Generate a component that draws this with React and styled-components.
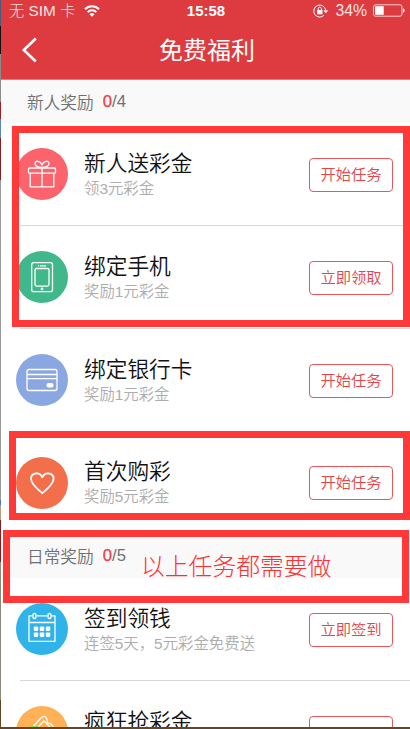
import React from "react";
import styled, { createGlobalStyle } from "styled-components";

const Global = createGlobalStyle`
  * { box-sizing: border-box; }
  html, body { margin: 0; padding: 0; overflow: hidden; }
  body { font-family: "Liberation Sans", "Noto Sans CJK SC", sans-serif; }
`;

const Screen = styled.div`
  position: relative;
  width: 410px;
  height: 729px;
  overflow: hidden;
  display: flex;
  flex-direction: column;
  background: #644526;
`;

const Body = styled.div`
  display: flex;
  height: 727px;
  overflow: hidden;
`;

const Edge = styled.div`
  flex: 0 0 1px;
  background: linear-gradient(#4a5b78 0 26px, #111 26px 54px, #8c8c8c 54px 102px, #9b2024 102px 119px, #5b87bd 119px 138px, #8e1b1f 138px 180px, #999 180px 500px, #4679ae 500px 505px, #b79b7c 505px 520px, #8e1b1f 520px 562px, #8d887c 562px 700px, #644526 700px);
`;

const Page = styled.main`
  flex: 1;
  background: #fff;
`;

const Header = styled.header`
  height: 80px;
  background: #dd3b40;
  border-bottom: 1px solid #b98f90;
  color: #fff;
`;

const StatusBar = styled.div`
  height: 21px;
  display: grid;
  grid-template-columns: 1fr auto 1fr;
  align-items: center;
  padding: 0 5px 0 8px;
  font-size: 15px;
  line-height: 21px;
`;

const StatusGroup = styled.div`
  display: flex;
  align-items: center;
  justify-content: ${(p) => (p.$end ? "flex-end" : "flex-start")};
  gap: ${(p) => (p.$end ? 6 : 9)}px;
  color: #fbe4e4;
  white-space: nowrap;
  font-weight: 300;
  font-size: ${(p) => (p.$end ? 15.8 : 15.3)}px;
`;

const Clock = styled.span`
  font-weight: 700;
  margin: 0 1px 0 -1px;
`;

const NavBar = styled.div`
  height: 58px;
  display: grid;
  grid-template-columns: 56px 1fr 56px;
  align-items: center;
  padding-left: 1px;
`;

const BackButton = styled.button`
  border: 0;
  padding: 0 0 0 19px;
  background: none;
  color: #fff;
  display: flex;
`;

const PageTitle = styled.h1`
  margin: 0;
  padding: 2px 0 0 2px;
  text-align: center;
  font-size: 24px;
  line-height: 36px;
  font-weight: 400;
`;

const SectionHead = styled.h2`
  margin: 0;
  height: ${(p) => p.$height}px;
  padding: 0 0 0 26px;
  display: flex;
  align-items: center;
  gap: 9px;
  background: #f9f9f9;
  color: #707070;
  font-size: 16.7px;
  font-weight: 350;
`;

const Done = styled.b`
  color: #ec4347;
  font-weight: 400;
  -webkit-text-stroke: 0.3px #ec4347;
`;

const Row = styled.article`
  position: relative;
  height: ${(p) => p.$height}px;
  padding: 0 17px 0 15px;
  display: flex;
  align-items: center;
  &::after {
    content: "";
    position: absolute;
    left: 19px;
    right: 0;
    bottom: 0;
    height: 1px;
    background: ${(p) => (p.$line ? "#d8d8d8" : "transparent")};
  }
`;

const Badge = styled.div`
  flex: 0 0 52px;
  height: 52px;
  margin-bottom: 1px;
  border-radius: 50%;
  background: ${(p) => p.$color};
  display: flex;
`;

const RowText = styled.div`
  flex: 1;
  padding-left: 16px;
`;

const RowTitle = styled.h3`
  margin: 0;
  font-size: 21.7px;
  line-height: 27px;
  font-weight: 350;
  color: #111;
`;

const RowNote = styled.p`
  margin: 0;
  font-size: 15.4px;
  line-height: 23px;
  font-weight: 350;
  color: #adadad;
`;

const Action = styled.button`
  flex: 0 0 84px;
  height: 34px;
  padding: 0;
  border: 1px solid #e5585c;
  border-radius: 4px;
  background: #fff;
  color: #e2464b;
  font: 350 15.3px/30px "Liberation Sans", "Noto Sans CJK SC", sans-serif;
`;

const Frame = styled.div`
  position: absolute;
  left: ${(p) => p.$x}px;
  top: ${(p) => p.$y}px;
  width: ${(p) => p.$w}px;
  height: ${(p) => p.$h}px;
  border: 7px solid #ff3838;
  pointer-events: none;
`;

const Remark = styled.p`
  position: absolute;
  left: 141px;
  top: 548px;
  margin: 0;
  font: 300 23.8px/34px "Noto Sans CJK SC", sans-serif;
  color: #ff3030;
  white-space: nowrap;
`;

const Glyph = styled.svg`
  display: block;
  fill: none;
  stroke: currentColor;
  color: #fff;
  stroke-linejoin: round;
`;

const Icon = ({ children }) => (
  <Glyph width="52" height="52" viewBox="0 0 52 52" strokeWidth="1.3">{children}</Glyph>
);

const icons = {
  gift: (
    <Icon>
      <rect x="12.5" y="20" width="27" height="5.2" rx="1" />
      <path d="M14.2 25.2v13.6h23.6V25.2M26 20v18.8" />
      <path d="M26 19.5c-3-.2-7-1.4-7-4 0-3.4 5.5-3 7 1.5 1.5-4.5 7-4.9 7-1.5 0 2.6-4 3.800-7 4z" />
    </Icon>
  ),
  phone: (
    <Icon>
      <rect x="15.7" y="11.7" width="20.8" height="29" rx="2" />
      <rect x="19" y="17.5" width="14" height="17.6" rx="1.5" />
      <path d="M22 14.8h1M24 14.8h6" />
      <circle cx="26" cy="37.8" r="1.4" fill="#fff" stroke="none" />
    </Icon>
  ),
  card: (
    <Icon>
      <rect x="11" y="15.5" width="30" height="21" rx="2" />
      <path d="M11 20.5h30M11 24.6h30" />
      <rect x="30.5" y="29" width="7" height="4.5" rx="2" fill="#fff" stroke="none" />
    </Icon>
  ),
  heart: (
    <Icon>
      <path strokeWidth="1.8" d="M26.300 36.200C22 32.200 15 27.500 15 21.800c0-6.200 8.500-7.400 11.300-1.500 2.800-5.900 11.300-4.700 11.300 1.500 0 5.700-7 10.400-11.300 14.400z" />
    </Icon>
  ),
  calendar: (
    <Icon>
      <path d="M16.5 12.8H13v25.5h26V12.8h-3.500M20.5 12.8h11M13 19.5h26" />
      <rect x="17" y="10.5" width="3" height="5" rx="1.3" />
      <rect x="32" y="10.5" width="3" height="5" rx="1.3" />
      <g fill="#fff" stroke="none">
        {[17.8, 23.8, 29.8].map((x) => [23.5, 29.5].map((y) => (
          <rect key={`${x}-${y}`} x={x} y={y} width="4.4" height="4.4" rx="0.8" />
        )))}
      </g>
    </Icon>
  ),
  coupon: (
    <Icon>
      <path d="M16 22l9-10c2-2 4-2 5-.5l1.500 2.500c-1 2 .5 4 3 3.500l5 6" />
      <path d="M21 22l7-7 6 6" />
      <ellipse cx="18.5" cy="25" rx="9.500" ry="5" fill="#82d957" stroke="none" />
    </Icon>
  ),
};

const Wifi = () => (
  <Glyph width="16" height="12" viewBox="0 0 16 12" strokeWidth="2">
    <path d="M1 4.2a10 10 0 0 1 14 0M3.6 7.1a6.300 6.300 0 0 1 8.800 0" />
    <path d="M8 11.8L5.5 9.3a3.6 3.6 0 0 1 5 0z" fill="#fff" stroke="none" />
  </Glyph>
);

const RotationLock = () => (
  <Glyph width="16" height="14" viewBox="0 0 16 14" strokeWidth="1">
    <path d="M12.7 6.2A6 6 0 1 0 11 11.3" />
    <path d="M10.3 6.2h5l-2.5 3z" fill="#fff" stroke="none" />
    <rect x="4" y="6" width="5.5" height="4.3" fill="#fff" stroke="none" />
    <path d="M5.2 6V4.8a1.600 1.600 0 0 1 3.200 0V6" />
  </Glyph>
);

const Battery = () => (
  <Glyph width="32" height="13" viewBox="0 0 32 13" strokeWidth="1">
    <rect x=".5" y=".8" width="28.5" height="11.4" rx="2" strokeOpacity=".75" />
    <rect x="2" y="2.2" width="8.7" height="8.6" fill="#fff" stroke="none" />
    <path d="M30 4.3c2.200 1 2.200 3.400 0 4.400z" fill="#fff" stroke="none" />
  </Glyph>
);

const newcomerTasks = [
  { icon: "gift", color: "#fb646c", title: "新人送彩金", note: "领3元彩金", action: "开始任务", height: 103, line: true },
  { icon: "phone", color: "#41b88b", title: "绑定手机", note: "奖励1元彩金", action: "立即领取", height: 103, line: true },
  { icon: "card", color: "#8ba7e1", title: "绑定银行卡", note: "奖励1元彩金", action: "开始任务", height: 103, line: true },
  { icon: "heart", color: "#f36f4b", title: "首次购彩", note: "奖励5元彩金", action: "开始任务", height: 102 },
];

const dailyTasks = [
  { icon: "calendar", color: "#2fb3e9", title: "签到领钱", note: "连签5天，5元彩金免费送", action: "立即签到", height: 103, line: true },
  { icon: "coupon", color: "#ffb157", title: "疯狂抢彩金", note: "", action: "", height: 103 },
];

const Task = ({ task }) => (
  <Row $height={task.height} $line={task.line}>
    <Badge $color={task.color}>{icons[task.icon]}</Badge>
    <RowText>
      <RowTitle>{task.title}</RowTitle>
      <RowNote>{task.note || "\u00a0"}</RowNote>
    </RowText>
    <Action>{task.action}</Action>
  </Row>
);

export default function App() {
  return (
    <Screen>
      <Global />
      <Body>
        <Edge />
        <Page>
          <Header>
            <StatusBar>
              <StatusGroup><span>无 SIM 卡</span><Wifi /></StatusGroup>
              <Clock>15:58</Clock>
              <StatusGroup $end><RotationLock /><span>34%</span><Battery /></StatusGroup>
            </StatusBar>
            <NavBar>
              <BackButton aria-label="返回">
                <Glyph width="17" height="26" viewBox="0 0 17 26" strokeWidth="2.6">
                  <path d="M14.8 1.5L2.8 13l12 11.5" strokeLinejoin="miter" />
                </Glyph>
              </BackButton>
              <PageTitle>免费福利</PageTitle>
            </NavBar>
          </Header>
          <SectionHead $height={43}>新人奖励 <span><Done>0</Done>/4</span></SectionHead>
          {newcomerTasks.map((t) => <Task key={t.title} task={t} />)}
          <SectionHead $height={44}>日常奖励 <span><Done>0</Done>/5</span></SectionHead>
          {dailyTasks.map((t) => <Task key={t.title} task={t} />)}
        </Page>
      </Body>
      <Frame $x={12} $y={126} $w={398} $h={201} />
      <Frame $x={9} $y={431} $w={401} $h={89} />
      <Frame $x={3} $y={530} $w={406} $h={73} />
      <Remark>以上任务都需要做</Remark>
    </Screen>
  );
}
